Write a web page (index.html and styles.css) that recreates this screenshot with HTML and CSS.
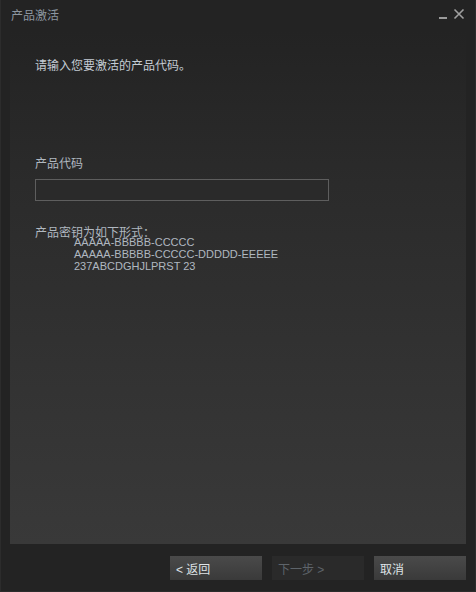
FILE: index.html
```html
<!DOCTYPE html>
<html>
<head>
<meta charset="utf-8">
<link rel="stylesheet" href="styles.css">
</head>
<body>
<div class="window">
  <div class="titlebar">
    <span class="title">产品激活</span>
    <div class="controls">
      <svg class="ctl" width="10" height="12" viewBox="0 0 10 12"><rect x="1" y="9" width="8" height="2" fill="#9a9a9a"/></svg>
      <svg class="ctl" width="12" height="12" viewBox="0 0 12 12"><path d="M1.5 1.5 L10.5 10.5 M10.5 1.5 L1.5 10.5" stroke="#a0a0a0" stroke-width="1.6"/></svg>
    </div>
  </div>
  <div class="panel">
    <p class="intro">请输入您要激活的产品代码。</p>
    <label class="label">产品代码</label>
    <div class="input"></div>
    <p class="format">产品密钥为如下形式：</p>
    <div class="codes">
      <div>AAAAA-BBBBB-CCCCC</div>
      <div>AAAAA-BBBBB-CCCCC-DDDDD-EEEEE</div>
      <div>237ABCDGHJLPRST 23</div>
    </div>
  </div>
  <div class="footer">
    <button class="btn">&lt; 返回</button>
    <button class="btn disabled">下一步 &gt;</button>
    <button class="btn">取消</button>
  </div>
</div>
</body>
</html>
```
FILE: styles.css
```css
html, body {
  margin: 0;
  padding: 0;
  background: #232323;
}
.window {
  width: 476px;
  height: 592px;
  box-sizing: border-box;
  border: 1px solid #2c2c2c;
  border-top: none;
  background: #232323;
  display: flex;
  flex-direction: column;
  font-family: "Liberation Sans", "Noto Sans CJK SC", sans-serif;
  font-size: 12px;
  color: #b8c0c8;
}
.titlebar {
  height: 30px;
  display: flex;
  align-items: center;
  justify-content: space-between;
  padding: 0 10px 0 10px;
  flex: none;
}
.title {
  color: #8c96a0;
  font-size: 12px;
  margin-top: -2px;
}
.controls {
  display: flex;
  align-items: flex-end;
  gap: 5px;
  margin-top: -2px;
}
.panel {
  margin: 0 9px;
  height: 514px;
  flex: none;
  background: linear-gradient(to bottom, #232323 0%, #2b2b2b 30%, #393939 100%);
  padding: 29px 25px 0 25px;
  box-sizing: border-box;
}
.intro {
  margin: 0;
  line-height: 14px;
  color: #c4ccd4;
}
.label {
  display: block;
  margin-top: 84px;
  line-height: 14px;
  color: #b0b8c0;
}
.input {
  margin-top: 8px;
  width: 294px;
  height: 22px;
  box-sizing: border-box;
  border: 1px solid #5e5e5e;
  background: #2a2a2a;
}
.format {
  margin: 25px 0 0 0;
  line-height: 14px;
  color: #b0b8c0;
}
.codes {
  margin-top: -4px;
  padding-left: 39px;
  font-size: 11px;
  line-height: 12px;
  color: #b0b8c0;
}
.footer {
  display: flex;
  justify-content: flex-end;
  gap: 10px;
  padding: 12px 9px 0 0;
}
.btn {
  width: 92px;
  height: 24px;
  border: none;
  margin: 0;
  padding: 0 0 0 6px;
  text-align: left;
  font-family: "Liberation Sans", "Noto Sans CJK SC", sans-serif;
  font-size: 12px;
  color: #dfe3e6;
  background: linear-gradient(to bottom, #4a4a4a, #3a3a3a);
}
.btn.disabled {
  background: #2a2a2a;
  color: #5e646a;
}
```
